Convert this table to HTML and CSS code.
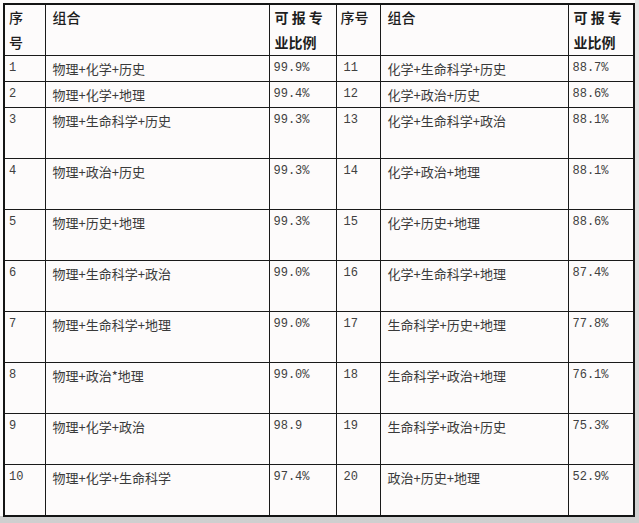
FILE: index.html
```html
<!DOCTYPE html>
<html lang="zh">
<head>
<meta charset="utf-8">
<link rel="stylesheet" href="styles.css">
</head>
<body>
<div class="sheet">
<table class="grid">
<colgroup>
<col class="c-no"><col class="c-combo"><col class="c-rate">
<col class="c-no2"><col class="c-combo2"><col class="c-rate2">
</colgroup>
<thead>
<tr class="head">
<th class="no">序<br>号</th><th>组合</th><th class="rate"><span class="spaced">可 报 专</span><br>业比例</th>
<th class="no">序号</th><th>组合</th><th class="rate"><span class="spaced">可 报 专</span><br>业比例</th>
</tr>
</thead>
<tbody>
<tr class="short"><td class="num">1</td><td>物理+化学+历史</td><td class="num">99.9%</td><td class="num r">11</td><td>化学+生命科学+历史</td><td class="num">88.7%</td></tr>
<tr class="short"><td class="num">2</td><td>物理+化学+地理</td><td class="num">99.4%</td><td class="num r">12</td><td>化学+政治+历史</td><td class="num">88.6%</td></tr>
<tr class="tall"><td class="num">3</td><td>物理+生命科学+历史</td><td class="num">99.3%</td><td class="num r">13</td><td>化学+生命科学+政治</td><td class="num">88.1%</td></tr>
<tr class="tall"><td class="num">4</td><td>物理+政治+历史</td><td class="num">99.3%</td><td class="num r">14</td><td>化学+政治+地理</td><td class="num">88.1%</td></tr>
<tr class="tall"><td class="num">5</td><td>物理+历史+地理</td><td class="num">99.3%</td><td class="num r">15</td><td>化学+历史+地理</td><td class="num">88.6%</td></tr>
<tr class="tall"><td class="num">6</td><td>物理+生命科学+政治</td><td class="num">99.0%</td><td class="num r">16</td><td>化学+生命科学+地理</td><td class="num">87.4%</td></tr>
<tr class="tall"><td class="num">7</td><td>物理+生命科学+地理</td><td class="num">99.0%</td><td class="num r">17</td><td>生命科学+历史+地理</td><td class="num">77.8%</td></tr>
<tr class="tall"><td class="num">8</td><td>物理+政治*地理</td><td class="num">99.0%</td><td class="num r">18</td><td>生命科学+政治+地理</td><td class="num">76.1%</td></tr>
<tr class="tall"><td class="num">9</td><td>物理+化学+政治</td><td class="num">98.9</td><td class="num r">19</td><td>生命科学+政治+历史</td><td class="num">75.3%</td></tr>
<tr class="tall"><td class="num">10</td><td>物理+化学+生命科学</td><td class="num">97.4%</td><td class="num r">20</td><td>政治+历史+地理</td><td class="num">52.9%</td></tr>
</tbody>
</table>
</div>
</body>
</html>
```
FILE: styles.css
```css
html, body {
  margin: 0;
  padding: 0;
}
body {
  background: linear-gradient(to bottom, #e6e6e6, #cfcfcf);
  width: 639px;
  height: 523px;
  overflow: hidden;
  font-family: "Noto Sans CJK SC", "Noto Sans", sans-serif;
  color: #3a3a3a;
}
.sheet {
  background: #fdfbfb;
  width: 635px;
  height: 516px;
  padding: 3px 0 0 3px;
  box-sizing: border-box;
}
.grid {
  border-collapse: collapse;
  table-layout: fixed;
  width: 631px;
  border: 2px solid #141414;
}
.c-no { width: 41px; }
.c-combo { width: 224px; }
.c-rate { width: 67px; }
.c-no2 { width: 44px; }
.c-combo2 { width: 188px; }
.c-rate2 { width: 66px; }
th, td {
  border: 1px solid #1a1a1a;
  vertical-align: top;
  text-align: left;
  padding: 0 0 0 7px;
  white-space: nowrap;
}
th {
  font-size: 14px;
  line-height: 25px;
  font-weight: 500;
  color: #1e1e1e;
}
th.no {
  padding-left: 4px;
}
th.rate {
  padding-left: 5px;
  font-weight: 700;
}
.spaced {
  font-weight: 600;
}
.head { height: 50px; }
.short { height: 26px; }
.tall { height: 51px; }
td {
  font-size: 13px;
  line-height: 25px;
  color: #3a3a3a;
}
td.num {
  font-family: "Liberation Mono", "DejaVu Sans Mono", monospace;
  font-size: 12px;
  color: #404040;
  padding-left: 4px;
}
td.num.r {
  padding-left: 7px;
}
```
